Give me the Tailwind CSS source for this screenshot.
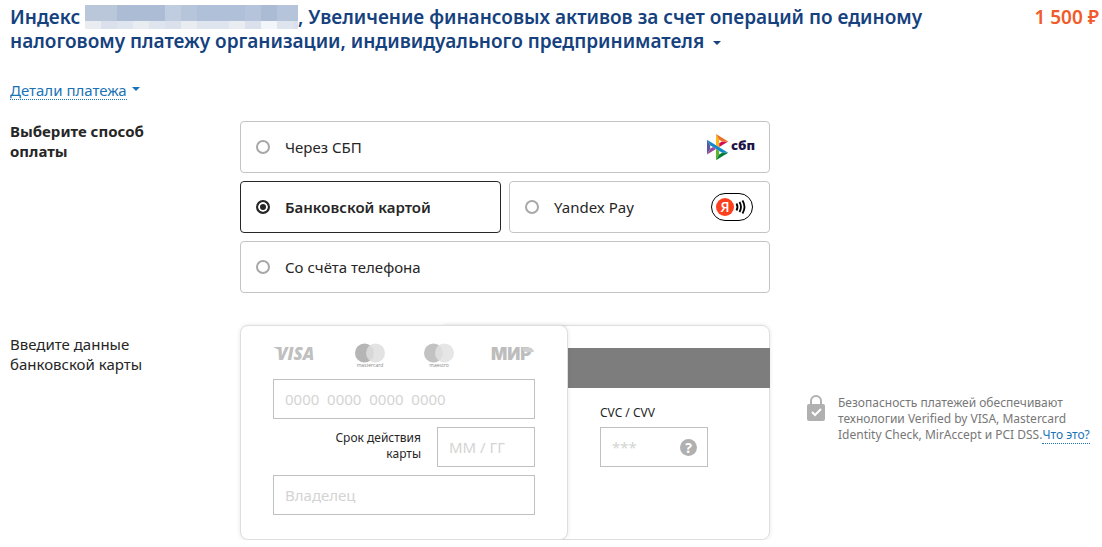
<!DOCTYPE html>
<html lang="ru">
<head>
    <meta charset="UTF-8">
    <meta name="viewport" content="width=device-width, initial-scale=1.0">
    <script src="https://cdn.jsdelivr.net/npm/@tailwindcss/browser@4"></script>
    <title>Оплата</title>
</head>
<body class="bg-white font-['Noto_Sans','Open_Sans',sans-serif] text-[15px] leading-5 text-[#262626]">
    <!-- Назначение и сумма -->
    <header class="flex items-start justify-between pt-[5px] pl-[10px] pr-[3px] text-[19px] leading-6 font-semibold">
        <h1 class="max-w-[940px] text-[#15417e]">
            Индекс
            <svg class="inline-block align-top h-6 w-[213px]" viewBox="0 0 213 24" shape-rendering="crispEdges" aria-hidden="true">
                <path fill="#b5c4da" d="M0 0h213v16H0z"/>
                <path fill="#bac7da" d="M0 0h32v16H0z"/>
                <path fill="#adbcd5" d="M32 0h48v16H32z"/>
                <path fill="#c0ccdf" d="M80 0h16v16H80z"/>
                <path fill="#b7c5da" d="M96 0h16v16H96z"/>
                <path fill="#b0c0d8" d="M112 0h48v16h-48z"/>
                <path fill="#acbbd4" d="M176 0h16v16h-16z"/>
                <path fill="#dfe5ee" d="M0 16h213v8H0z"/>
                <path fill="#e9edf2" d="M0 16h16v8H0zM48 16h16v8H48zM96 16h16v8H96zM144 16h16v8h-16z"/>
                <path fill="#dae1ec" d="M16 16h16v8H16zM80 16h16v8H80zM160 16h16v8h-16zM208 16h5v8h-5z"/>
                <path fill="#f2f5f9" d="M176 16h16v8h-16z"/>
            </svg>, Увеличение финансовых активов за счет операций по единому
            налоговому платежу организации, индивидуального предпринимателя
            <svg class="inline-block ml-1 align-[3px] w-2 h-1" viewBox="0 0 8 4" aria-hidden="true"><path fill="currentColor" d="M0 0h8L4 4z"/></svg>
        </h1>
        <p class="whitespace-nowrap text-[#f15a29]">1 500 ₽</p>
    </header>

    <div class="flex items-start pt-7 pl-[10px] text-[#1a73b5]">
        <a href="#" class="border-b border-dotted border-[#1a73b5] leading-[18px]">Детали платежа</a>
        <svg class="ml-[5px] mt-1.5 w-2 h-1" viewBox="0 0 8 4" aria-hidden="true"><path fill="currentColor" d="M0 0h8L4 4z"/></svg>
    </div>

    <form class="pl-[10px] pt-[21px]">
        <!-- Способ оплаты -->
        <div class="grid grid-cols-[230px_530px_1fr]">
            <h2 id="method-title" class="w-40 font-bold">Выберите способ оплаты</h2>
            <div role="radiogroup" aria-labelledby="method-title" class="grid grid-cols-2 gap-2">
                <label class="col-span-2 flex items-center h-[52px] px-[15px] border border-[#c4c4c4] rounded">
                    <input type="radio" name="method" class="appearance-none size-[14px] mr-[15px] rounded-full border-2 border-[#a8a8a8]">
                    <span>Через СБП</span>
                    <svg class="ml-auto w-12 h-7 overflow-visible" viewBox="0 0 48 28" aria-hidden="true">
                        <g transform="translate(1 1) scale(.218)">
                            <path fill="#5b57a2" d="M0 26.120l14.532 25.975v15.844L.017 93.863z"/>
                            <path fill="#d90751" d="M55.797 42.643l13.617-8.346 27.868-.026-41.485 25.414z"/>
                            <path fill="#fab718" d="M55.720 25.967l.077 34.390-14.566-8.950V0z"/>
                            <path fill="#ed6f26" d="M97.282 34.271l-27.869.026-13.693-8.330L41.231 0z"/>
                            <path fill="#63b22f" d="M55.797 94.007V77.322l-14.566-8.780.008 51.458z"/>
                            <path fill="#1487c9" d="M69.380 85.737L14.531 52.095 0 26.120l97.223 59.583z"/>
                            <path fill="#017f36" d="M41.240 120l14.556-25.993 13.583-8.270 27.843-.034z"/>
                            <path fill="#984995" d="M.017 93.863l41.333-25.320-13.896-8.526-12.922 7.922z"/>
                        </g>
                        <text x="25" y="17" class="font-['Open_Sans',sans-serif] font-extrabold text-[13px]" fill="#1d1346">сбп</text>
                    </svg>
                </label>
                <label class="flex items-center h-[52px] px-[15px] border border-[#262626] rounded font-semibold">
                    <input type="radio" name="method" checked class="appearance-none size-[14px] mr-[15px] rounded-full border-2 border-[#262626] bg-[#262626] shadow-[inset_0_0_0_2px_white]">
                    <span>Банковской картой</span>
                </label>
                <label class="flex items-center h-[52px] px-[15px] border border-[#c4c4c4] rounded">
                    <input type="radio" name="method" class="appearance-none size-[14px] mr-[15px] rounded-full border-2 border-[#a8a8a8]">
                    <span>Yandex Pay</span>
                    <svg class="ml-auto w-[43px] h-7" viewBox="0 0 43 28" aria-hidden="true">
                        <rect x=".5" y=".5" width="41" height="27" rx="13.500" fill="#fff" stroke="#000"/>
                        <circle cx="14" cy="14" r="9" fill="#fc3f1d"/>
                        <text x="14" y="19" text-anchor="middle" class="font-['Open_Sans',sans-serif] font-semibold text-[14px]" fill="#fff">Я</text>
                        <path d="M25.500 10.500q2 3.500 0 7M28.500 9q3 5 0 10M31.500 7.500q4 6.500 0 13" fill="none" stroke="#000" stroke-width="1.800"/>
                    </svg>
                </label>
                <label class="col-span-2 flex items-center h-[52px] px-[15px] border border-[#c4c4c4] rounded">
                    <input type="radio" name="method" class="appearance-none size-[14px] mr-[15px] rounded-full border-2 border-[#a8a8a8]">
                    <span>Со счёта телефона</span>
                </label>
            </div>
        </div>

        <!-- Данные карты -->
        <div class="grid grid-cols-[230px_530px_1fr] mt-8">
            <h2 class="w-40 pt-[9px]">Введите данные банковской карты</h2>
            <div class="flex">
                <div class="relative z-10 w-[328px] h-[215px] px-8 pt-[17px] bg-white border border-[#dedede] rounded-lg shadow-[0_0_4px_rgba(0,0,0,0.1)]">
                    <svg class="block w-[262px] h-[26px] mb-[10px] overflow-visible" viewBox="0 0 262 26" aria-hidden="true">
                        <path fill="#c0c0c0" d="M1 4h6l2 6q-3-4-8-5.500z"/>
                        <text x="4" y="17" class="font-['Open_Sans',sans-serif] font-extrabold italic text-[17px]" fill="#c0c0c0">VISA</text>
                        <circle cx="91.500" cy="10" r="9.500" fill="#b5b5b5"/>
                        <circle cx="102.500" cy="10" r="9.500" fill="#dedede" fill-opacity=".85"/>
                        <text x="97" y="24" text-anchor="middle" class="font-['Open_Sans',sans-serif] text-[5px]" fill="#888">mastercard</text>
                        <circle cx="160.500" cy="10" r="9.500" fill="#c2c2c2"/>
                        <circle cx="171.500" cy="10" r="9.500" fill="#e2e2e2" fill-opacity=".85"/>
                        <text x="166" y="24" text-anchor="middle" class="font-['Open_Sans',sans-serif] text-[5px]" fill="#888">maestro</text>
                        <text x="218" y="17" class="font-['Inter',sans-serif] font-black text-[17px]" fill="#bdbdbd">МИР</text>
                        <path fill="#cfcfcf" d="M249 4.500h7q4 0 5 4.500h-7q-4 0-5-4.500z"/>
                    </svg>
                    <input type="text" aria-label="Номер карты" placeholder="0000  0000  0000  0000" class="block w-[262px] h-10 px-[11px] border border-[#c0c0c0] placeholder:text-[#d4d4d4]">
                    <div class="flex items-start justify-between w-[262px] my-2">
                        <label for="expiry" class="w-[148px] pt-[3px] text-right text-xs leading-4">Срок действия<br>карты</label>
                        <input id="expiry" type="text" placeholder="ММ / ГГ" class="block w-[98px] h-10 px-[11px] border border-[#c0c0c0] placeholder:text-[#d4d4d4]">
                    </div>
                    <input type="text" aria-label="Владелец" placeholder="Владелец" class="block w-[262px] h-10 px-[11px] border border-[#c0c0c0] placeholder:text-[#d4d4d4]">
                </div>
                <div class="flex-1 -ml-32 h-[215px] pt-[22px] border border-[#dedede] rounded-lg shadow-[0_0_4px_rgba(0,0,0,0.1)]">
                    <div class="h-10 -mr-px bg-[#7d7d7d]"></div>
                    <div class="pl-[159px] pt-[17px]">
                        <label for="cvc" class="block text-xs leading-4">CVC / CVV</label>
                        <div class="flex items-center w-[108px] h-10 mt-[6px] pr-[10px] border border-[#c0c0c0]">
                            <input id="cvc" type="text" placeholder="***" class="min-w-0 flex-1 h-full pl-[11px] placeholder:text-[#d4d4d4]">
                            <button type="button" class="size-[17px] rounded-full bg-[#b0b0b0] text-white text-sm leading-[17px] font-bold">?</button>
                        </div>
                    </div>
                </div>
            </div>
            <div class="flex gap-3 pt-[70px] pl-[37px] text-xs leading-4 text-[#777]">
                <svg class="shrink-0 w-[19px] h-[27px]" viewBox="0 0 19 27" aria-hidden="true">
                    <path d="M4 13V6a5 5 0 0 1 10 0V13" fill="none" stroke="#b0b0b0" stroke-width="2"/>
                    <rect y="9" width="18" height="17" rx="2" fill="#b0b0b0"/>
                    <path d="M5 17l3 3 6-6" fill="none" stroke="#fff" stroke-width="2"/>
                </svg>
                <p class="whitespace-nowrap">
                    Безопасность платежей обеспечивают<br>
                    технологии Verified by VISA, Mastercard<br>
                    Identity Check, MirAccept и PCI DSS.<a href="#" class="border-b border-dotted border-[#1a73b5] text-[#1a73b5]">Что это?</a>
                </p>
            </div>
        </div>
    </form>
</body>
</html>
